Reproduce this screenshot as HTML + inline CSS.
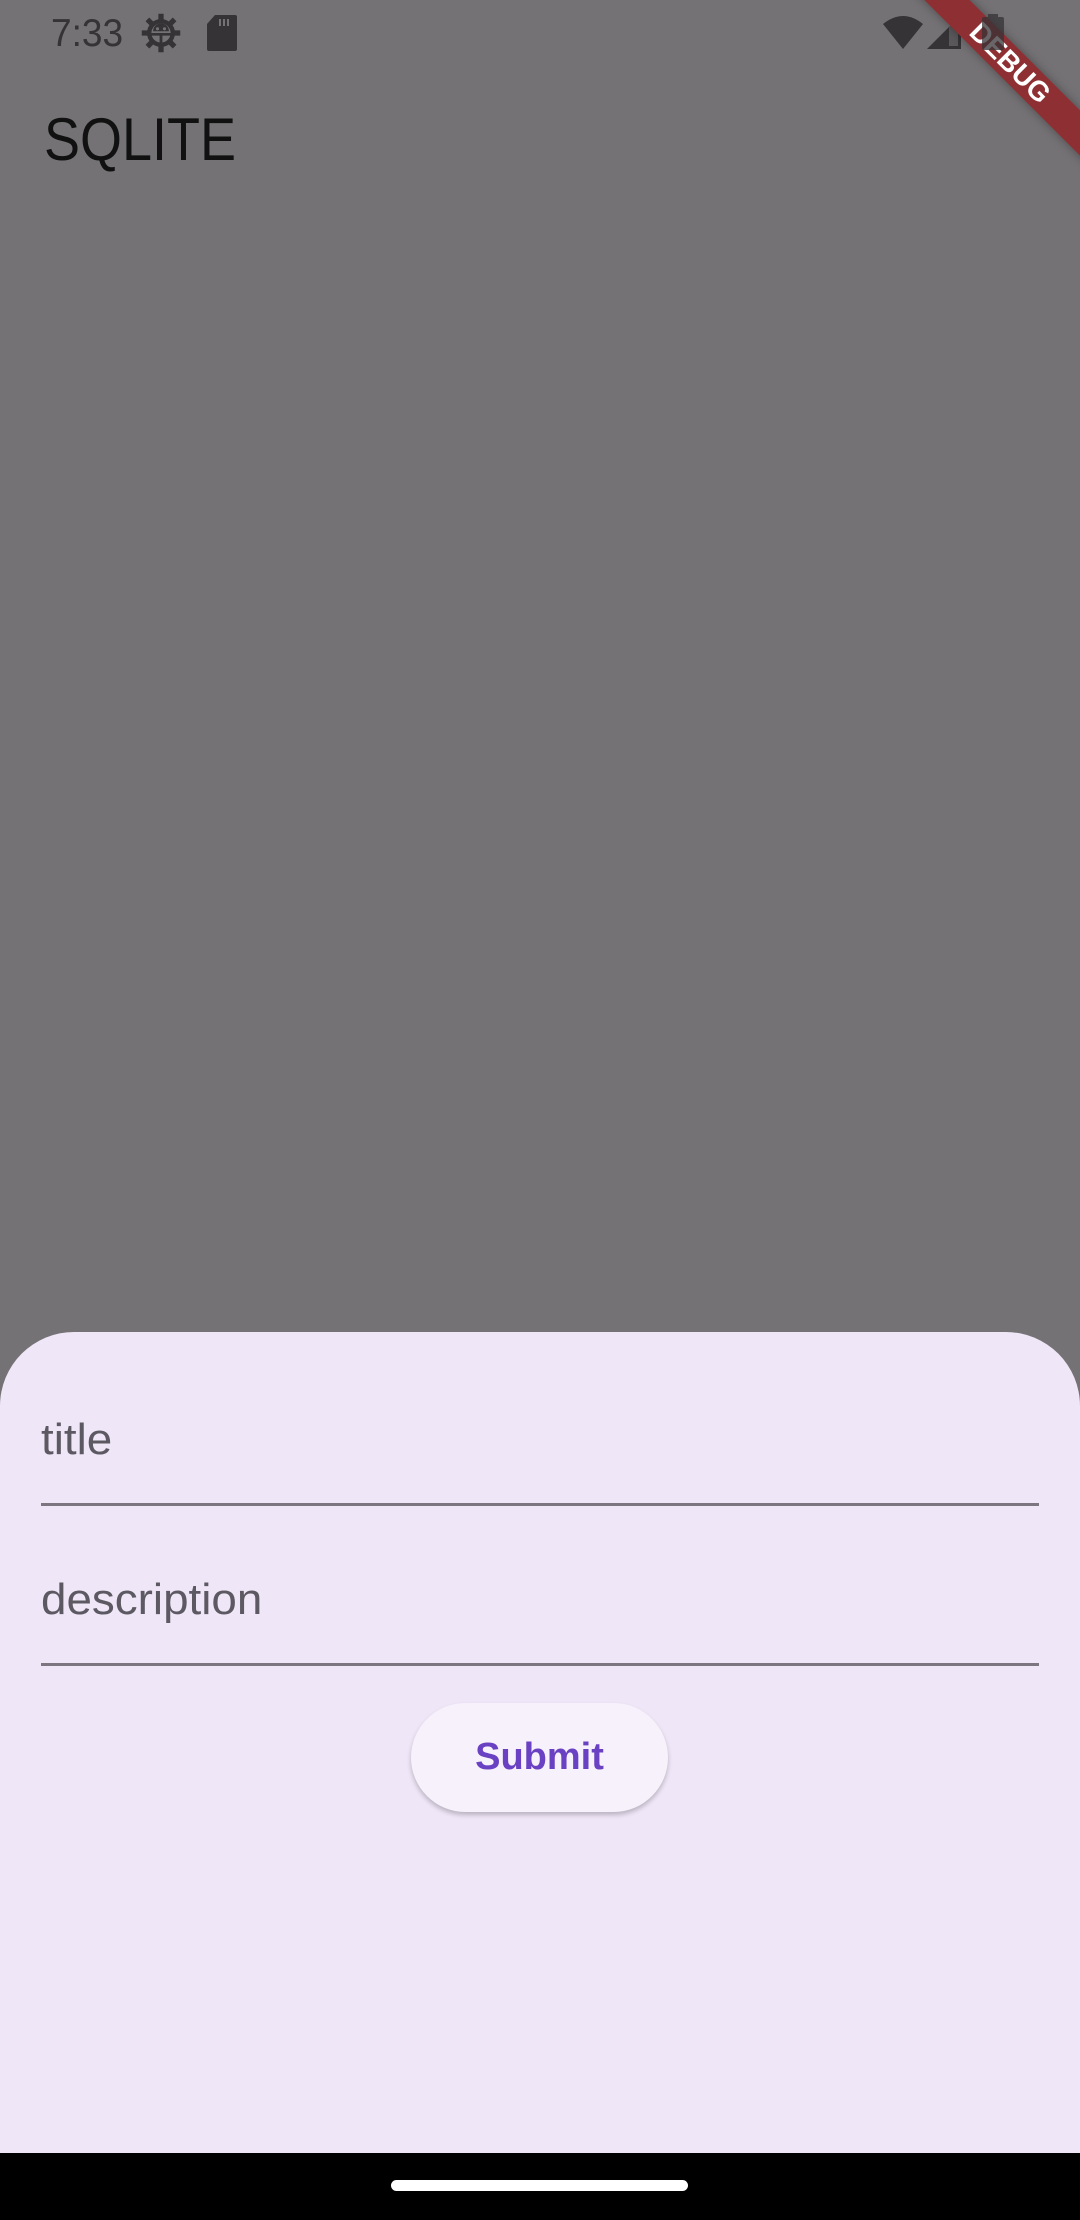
<!DOCTYPE html>
<html><head><meta charset="utf-8"><style>
html,body{margin:0;padding:0}
body{width:1080px;height:2220px;position:relative;overflow:hidden;background:#747275;font-family:"Liberation Sans",Roboto,sans-serif}
.abs{position:absolute}
</style></head><body>
<div class="abs" style="left:51px;top:8px;font-size:39px;color:#353336;line-height:52px;transform:scaleX(.95);transform-origin:0 0">7:33</div>
<svg class="abs" style="left:140px;top:12px" width="42" height="42" viewBox="0 0 24 24"><g fill="#353336"><circle cx="12" cy="12" r="8"/><rect x="10.5" y="1" width="3" height="22"/><rect x="1" y="10.5" width="22" height="3"/><rect x="10.5" y="1" width="3" height="22" transform="rotate(45 12 12)"/><rect x="10.5" y="1" width="3" height="22" transform="rotate(-45 12 12)"/></g><circle cx="12" cy="12" r="5.5" fill="#747275"/><path d="M6.5 12h11v1.5H6.5zM11.2 12h1.6v6h-1.6z" fill="#353336"/><path d="M7.5 11a4.5 4.5 0 0 1 9 0z" fill="#353336"/><circle cx="10" cy="9.6" r=".9" fill="#747275"/><circle cx="14" cy="9.6" r=".9" fill="#747275"/></svg>
<svg class="abs" style="left:207px;top:15px" width="30" height="36" viewBox="0 0 30 36"><path d="M8 0h20a2 2 0 0 1 2 2v32a2 2 0 0 1-2 2H2a2 2 0 0 1-2-2V9z" fill="#353336"/><rect x="12" y="4" width="2" height="7" fill="#747275"/><rect x="16" y="4" width="2" height="7" fill="#747275"/><rect x="20" y="4" width="2" height="7" fill="#747275"/></svg>
<svg class="abs" style="left:882px;top:14px" width="42" height="36" viewBox="0 0 42 36"><path d="M21 35L1 10Q21-6 41 10z" fill="#353336"/></svg>
<svg class="abs" style="left:927px;top:15px" width="35" height="35" viewBox="0 0 35 35"><path d="M34 0V34H0z" fill="#353336"/><path d="M22 12V31H31V3z" fill="#5a585b"/></svg>
<div class="abs" style="left:810px;top:47px;width:400px;height:32px;background:#8e3033;transform:rotate(45deg);transform-origin:200px 16px;box-shadow:0 0 10px rgba(0,0,0,.35);color:#fff;font-weight:bold;font-size:28px;line-height:32px;text-align:center">DEBUG</div>
<svg class="abs" style="left:982px;top:14px" width="22" height="36" viewBox="0 0 22 36"><path d="M6 0h10v3h4a2 2 0 0 1 2 2v29a2 2 0 0 1-2 2H2a2 2 0 0 1-2-2V5a2 2 0 0 1 2-2h4z" fill="#353336" opacity=".75"/></svg>
<div class="abs" style="left:44px;top:102px;font-size:60px;color:#111;line-height:76px;transform:scaleX(.9);transform-origin:0 0">SQLITE</div>
<div class="abs" style="left:0;top:1332px;width:1080px;height:830px;background:#efe6f7;border-radius:74px 74px 0 0"></div>
<div class="abs" style="left:41px;top:1412px;font-size:44px;color:#5d5963;line-height:56px;transform:scaleX(1.04);transform-origin:0 0">title</div>
<div class="abs" style="left:41px;top:1503px;width:998px;height:3px;background:#7b7680"></div>
<div class="abs" style="left:41px;top:1572px;font-size:44px;color:#5d5963;line-height:56px;transform:scaleX(1.04);transform-origin:0 0">description</div>
<div class="abs" style="left:41px;top:1663px;width:998px;height:3px;background:#7b7680"></div>
<div class="abs" style="left:411px;top:1703px;width:257px;height:109px;border-radius:55px;background:#f6f1fb;box-shadow:0 3px 5px rgba(0,0,0,.22);color:#6a41c2;font-size:38px;font-weight:bold;text-align:center;line-height:109px">Submit</div>
<div class="abs" style="left:0;top:2153px;width:1080px;height:67px;background:#000"></div>
<div class="abs" style="left:391px;top:2180px;width:297px;height:11px;border-radius:6px;background:#fff"></div>
</body></html>
